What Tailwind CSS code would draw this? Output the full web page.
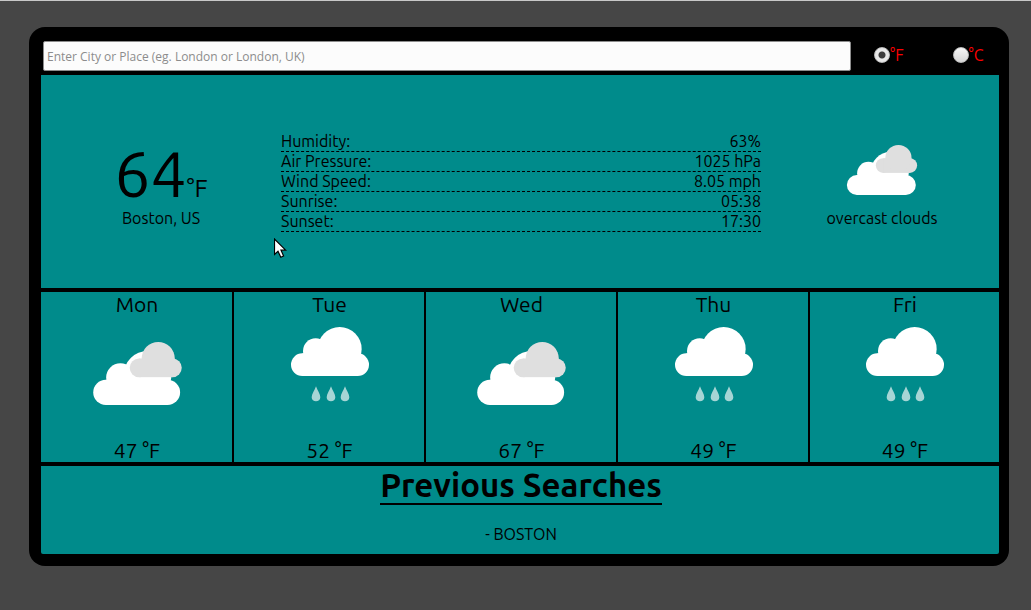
<!DOCTYPE html>
<html lang="en">
<head>
<meta charset="utf-8">
<meta name="viewport" content="width=device-width, initial-scale=1">
<title>Weather</title>
<script src="https://cdn.jsdelivr.net/npm/@tailwindcss/browser@4"></script>
</head>
<body class="min-h-screen border-t border-[#c8c8c8] bg-[#464646] font-['Ubuntu','Noto_Sans',sans-serif] text-base text-black">

<!-- Shared weather symbols -->
<svg class="hidden" aria-hidden="true">
  <symbol id="clouds" viewBox="190 185 267 190">
    <g fill="#fff">
      <circle cx="228" cy="337" r="38"/><circle cx="414" cy="337" r="38"/>
      <rect x="228" y="299" width="186" height="76"/>
      <circle cx="272" cy="292" r="43"/><circle cx="354" cy="284" r="72"/>
    </g>
    <g fill="#dfdfdf">
      <circle cx="328" cy="263" r="28"/><circle cx="429" cy="263" r="28"/>
      <rect x="328" y="235" width="101" height="56"/>
      <circle cx="386" cy="235" r="50"/>
    </g>
  </symbol>
  <symbol id="rain" viewBox="180 140 234 225">
    <g fill="#fff">
      <circle cx="214" cy="253" r="34"/><circle cx="380" cy="253" r="34"/>
      <rect x="214" y="219" width="166" height="68"/>
      <circle cx="254" cy="212" r="38"/><circle cx="326" cy="206" r="66"/>
    </g>
    <g fill="#a6d5d5">
      <path d="M255 318C259 330 268 341 268 351C268 359 262 363 255 363C248 363 242 359 242 351C242 341 251 330 255 318Z"/>
      <path d="M300 318C304 330 313 341 313 351C313 359 307 363 300 363C293 363 287 359 287 351C287 341 296 330 300 318Z"/>
      <path d="M342 318C346 330 355 341 355 351C355 359 349 363 342 363C335 363 329 359 329 351C329 341 338 330 342 318Z"/>
    </g>
  </symbol>
</svg>

<main class="relative mt-[26px] mr-[22px] mb-11 ml-[29px] rounded-2xl bg-black pt-3.5 pr-2.5 pb-3 pl-3">
  <form class="flex items-center pb-1 pl-0.5">
    <input type="text" aria-label="City or place" placeholder="Enter City or Place (eg. London or London, UK)" class="h-[30px] min-w-0 flex-1 rounded-xs border border-[#8c8c8c] bg-[#fcfcfc] px-[3px] font-['Open_Sans',sans-serif] text-xs text-black placeholder:text-[#8c8c8c]">
    <div class="flex w-[148px] shrink-0 gap-[49px] pb-0.5 pl-[23px] leading-5 text-[#ff0000]">
      <label class="flex items-center whitespace-nowrap"><input type="radio" name="unit" checked class="size-4 appearance-none rounded-full border border-[#bcbcbc] bg-linear-to-b from-[#f6f6f6] to-[#d6d6d6] checked:bg-[radial-gradient(circle,#3c3c3c_3px,#e8e8e8_4px)]">°F</label>
      <label class="flex items-center whitespace-nowrap"><input type="radio" name="unit" class="size-4 appearance-none rounded-full border border-[#bcbcbc] bg-linear-to-b from-[#f6f6f6] to-[#d6d6d6] checked:bg-[radial-gradient(circle,#3c3c3c_3px,#e8e8e8_4px)]">°C</label>
    </div>
  </form>

  <section class="grid min-h-[213px] grid-cols-[120fr_240fr_119fr] items-center bg-[#008b8b]" aria-label="Current weather">
    <div class="pt-0.5 text-center">
      <p class="text-[64px] leading-[70px]">64<span class="text-[25px] leading-none">°F</span></p>
      <p class="leading-5">Boston, US</p>
    </div>
    <dl class="leading-[18px]">
      <div class="flex justify-between border-b border-dashed border-black pb-px"><dt>Humidity:</dt><dd>63%</dd></div>
      <div class="flex justify-between border-b border-dashed border-black pb-px"><dt>Air Pressure:</dt><dd>1025 hPa</dd></div>
      <div class="flex justify-between border-b border-dashed border-black pb-px"><dt>Wind Speed:</dt><dd>8.05 mph</dd></div>
      <div class="flex justify-between border-b border-dashed border-black pb-px"><dt>Sunrise:</dt><dd>05:38</dd></div>
      <div class="flex justify-between border-b border-dashed border-black pb-px"><dt>Sunset:</dt><dd>17:30</dd></div>
    </dl>
    <div class="flex flex-col items-center gap-[13px] pt-[9px] pl-1">
      <svg class="h-[50px] w-[72px]" aria-hidden="true"><use href="#clouds"/></svg>
      <p class="leading-5">overcast clouds</p>
    </div>
  </section>

  <section class="my-1 grid grid-cols-[191fr_190fr_190fr_190fr_189fr] gap-0.5 text-center text-[21px] leading-6" aria-label="Forecast">
    <div class="bg-[#008b8b] pl-px"><h2>Mon</h2><div class="flex h-[122px] justify-center pt-[26px]"><svg class="h-[63px] w-[89px]" aria-hidden="true"><use href="#clouds"/></svg></div><p>47 °F</p></div>
    <div class="bg-[#008b8b] pl-px"><h2>Tue</h2><div class="flex h-[122px] justify-center pt-[11px]"><svg class="h-[75px] w-[78px]" aria-hidden="true"><use href="#rain"/></svg></div><p>52 °F</p></div>
    <div class="bg-[#008b8b] pl-px"><h2>Wed</h2><div class="flex h-[122px] justify-center pt-[26px]"><svg class="h-[63px] w-[89px]" aria-hidden="true"><use href="#clouds"/></svg></div><p>67 °F</p></div>
    <div class="bg-[#008b8b] pl-px"><h2>Thu</h2><div class="flex h-[122px] justify-center pt-[11px]"><svg class="h-[75px] w-[78px]" aria-hidden="true"><use href="#rain"/></svg></div><p>49 °F</p></div>
    <div class="bg-[#008b8b] pl-px"><h2>Fri</h2><div class="flex h-[122px] justify-center pt-[11px]"><svg class="h-[75px] w-[78px]" aria-hidden="true"><use href="#rain"/></svg></div><p>49 °F</p></div>
  </section>

  <section class="flex flex-col items-center rounded-b-xs bg-[#008b8b] pb-2.5 pl-0.5">
    <h2 class="border-b-2 border-black text-[33px] leading-[37px] font-bold">Previous Searches</h2>
    <ul class="pt-[19px] leading-5"><li>- BOSTON</li></ul>
  </section>

  <!-- Mouse pointer -->
  <svg class="pointer-events-none absolute top-[211px] left-[245px] h-[21px] w-[13px]" viewBox="0 0 13 21" aria-hidden="true">
    <path d="M.5 1V16.5L4 13.3L6.8 19.3L9.6 18L7 12.2H11.7Z" fill="#fff" stroke="#000" stroke-width="1.2"/>
  </svg>
</main>
</body>
</html>
